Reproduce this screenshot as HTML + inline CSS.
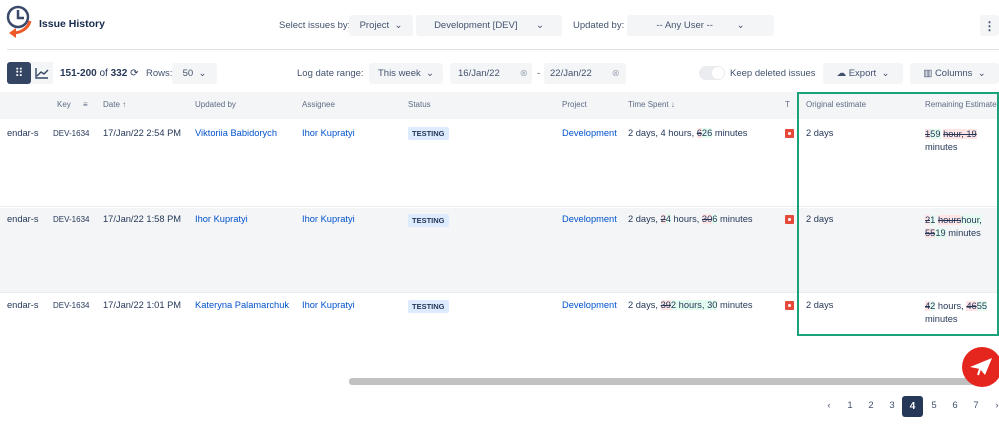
<!DOCTYPE html>
<html><head><meta charset="utf-8"><style>
*{box-sizing:border-box;margin:0;padding:0}
body{width:999px;height:425px;overflow:hidden;background:#fff;font-family:"Liberation Sans",sans-serif;color:#253858;position:relative;font-size:9.3px}
.a{position:absolute;white-space:nowrap}
.sel{position:absolute;background:#f4f5f7;border-radius:3px;height:21px;font-size:9.5px;color:#42526e;display:flex;align-items:center;justify-content:center;white-space:nowrap}
.lbl{position:absolute;font-size:9.5px;color:#42526e;white-space:nowrap}
.th{position:absolute;top:100px;font-size:8px;color:#5e6c84;white-space:nowrap}
.lnk{color:#0052cc}
.del{background:#ffe5e5;text-decoration:line-through}
.ins{background:#e3fcef}
.tag{position:absolute;background:#deebff;color:#253858;font-size:7.5px;font-weight:bold;padding:2px 4px;border-radius:2px}
.red{position:absolute;width:9px;height:9px;background:#e5493a;border-radius:1px}
.red:after{content:"";position:absolute;left:3px;top:3px;width:3px;height:3px;background:#fff;border-radius:50%}
.pg{position:absolute;top:400px;font-size:9.5px;color:#42526e;width:20px;text-align:center}
</style></head><body>
<svg class="a" style="left:5px;top:4px" width="30" height="34" viewBox="0 0 30 34"><circle cx="13" cy="13" r="10" fill="none" stroke="#3b4a6b" stroke-width="2.5"/><path d="M13 6v8h6" fill="none" stroke="#3b4a6b" stroke-width="2.5"/><path d="M25 17c-2 8-10 12-17 12" fill="none" stroke="#f05a28" stroke-width="3"/><path d="M4 29l7-5v10z" fill="#f05a28"/></svg>
<div class="a" style="left:39px;top:18px;font-size:10.5px;font-weight:bold;color:#172b4d">Issue History</div>
<div class="lbl" style="left:279px;top:20px">Select issues by:</div>
<div class="sel" style="left:349px;top:15px;width:64px">Project &nbsp;⌄</div>
<div class="sel" style="left:416px;top:15px;width:146px">Development [DEV] &nbsp;&nbsp;&nbsp;&nbsp;&nbsp;&nbsp;⌄</div>
<div class="lbl" style="left:573px;top:20px">Updated by:</div>
<div class="sel" style="left:627px;top:15px;width:147px">-- Any User -- &nbsp;&nbsp;&nbsp;&nbsp;&nbsp;&nbsp;&nbsp;&nbsp;⌄</div>
<div class="sel" style="left:980px;top:15px;width:19px;font-weight:bold;font-size:12px">⋮</div>
<div class="a" style="left:7px;top:49px;width:992px;height:1px;background:#dfe1e6"></div>
<div class="a" style="left:7px;top:62px;width:24px;height:22px;background:#344563;border-radius:3px;color:#fff;text-align:center;line-height:22px;font-size:12px">⠿</div>
<svg class="a" style="left:31px;top:62px;background:#f4f5f7" width="22" height="22" viewBox="0 0 22 22"><path d="M5 6v10h12M6 14l4-4 3 2 4-4" fill="none" stroke="#344563" stroke-width="1.4"/></svg>
<div class="a" style="left:60px;top:68px;font-size:10px"><b>151-200</b> of <b>332</b> ⟳</div>
<div class="lbl" style="left:146px;top:68px">Rows:</div>
<div class="sel" style="left:172px;top:63px;width:45px">50 &nbsp;⌄</div>
<div class="lbl" style="left:297px;top:68px">Log date range:</div>
<div class="sel" style="left:369px;top:63px;width:74px">This week &nbsp;⌄</div>
<div class="sel" style="left:450px;top:63px;width:82px;justify-content:flex-start;padding-left:8px">16/Jan/22 <span style="margin-left:20px;color:#a5adba">⊗</span></div>
<div class="lbl" style="left:537px;top:68px">-</div>
<div class="sel" style="left:544px;top:63px;width:82px;justify-content:flex-start;padding-left:6px">22/Jan/22 <span style="margin-left:20px;color:#a5adba">⊗</span></div>
<div class="a" style="left:699px;top:66px;width:26px;height:14px;background:#ebecf0;border-radius:7px"><div style="position:absolute;right:1px;top:1px;width:12px;height:12px;border-radius:50%;background:#fff"></div></div>
<div class="lbl" style="left:730px;top:68px">Keep deleted issues</div>
<div class="sel" style="left:823px;top:63px;width:80px">☁ Export &nbsp;⌄</div>
<div class="sel" style="left:910px;top:63px;width:89px">▥ Columns &nbsp;⌄</div>
<div class="a" style="left:0;top:92px;width:999px;height:27px;background:#f4f5f7"></div>
<div class="th" style="left:57px">Key</div><div class="th" style="left:83px">≡</div>
<div class="th" style="left:103px">Date ↑</div>
<div class="th" style="left:195px">Updated by</div>
<div class="th" style="left:302px">Assignee</div>
<div class="th" style="left:408px">Status</div>
<div class="th" style="left:562px">Project</div>
<div class="th" style="left:628px">Time Spent ↓</div>
<div class="th" style="left:785px">T</div>
<div class="th" style="left:806px">Original estimate</div>
<div class="th" style="left:925px">Remaining Estimate</div>
<div class="a" style="left:0;top:121px;width:999px;height:86px;background:#fff;border-bottom:1px solid #ebecf0"></div>
<div class="a" style="left:0;top:208px;width:999px;height:85px;background:#f4f5f7;border-bottom:1px solid #ebecf0"></div>
<div class="a" style="left:7px;top:128px">endar-s</div><div class="a" style="left:53px;top:129px;font-size:8px">DEV-1634</div><div class="a" style="left:103px;top:128px">17/Jan/22 2:54 PM</div><div class="a lnk" style="left:195px;top:128px">Viktoriia Babidorych</div><div class="a lnk" style="left:302px;top:128px">Ihor Kupratyi</div><div class="tag" style="left:408px;top:127px">TESTING</div><div class="a lnk" style="left:562px;top:128px">Development</div><div class="a" style="left:628px;top:128px">2 days, 4 hours, <span class="del">6</span><span class="ins">26</span> minutes</div><div class="red" style="left:785px;top:129px"></div><div class="a" style="left:806px;top:128px">2 days</div><div class="a" style="left:925px;top:128px;line-height:13px"><span class="del">1</span><span class="ins">59</span> <span class="del">hour, 19</span><br>minutes</div>
<div class="a" style="left:7px;top:214px">endar-s</div><div class="a" style="left:53px;top:215px;font-size:8px">DEV-1634</div><div class="a" style="left:103px;top:214px">17/Jan/22 1:58 PM</div><div class="a lnk" style="left:195px;top:214px">Ihor Kupratyi</div><div class="a lnk" style="left:302px;top:214px">Ihor Kupratyi</div><div class="tag" style="left:408px;top:214px">TESTING</div><div class="a lnk" style="left:562px;top:214px">Development</div><div class="a" style="left:628px;top:214px">2 days, <span class="del">2</span><span class="ins">4</span> hours, <span class="del">30</span><span class="ins">6</span> minutes</div><div class="red" style="left:785px;top:215px"></div><div class="a" style="left:806px;top:214px">2 days</div><div class="a" style="left:925px;top:214px;line-height:13px"><span class="del">2</span><span class="ins">1</span> <span class="del">hours</span><span class="ins">hour,</span><br><span class="del">55</span><span class="ins">19</span> minutes</div>
<div class="a" style="left:7px;top:300px">endar-s</div><div class="a" style="left:53px;top:301px;font-size:8px">DEV-1634</div><div class="a" style="left:103px;top:300px">17/Jan/22 1:01 PM</div><div class="a lnk" style="left:195px;top:300px">Kateryna Palamarchuk</div><div class="a lnk" style="left:302px;top:300px">Ihor Kupratyi</div><div class="tag" style="left:408px;top:300px">TESTING</div><div class="a lnk" style="left:562px;top:300px">Development</div><div class="a" style="left:628px;top:300px">2 days, <span class="del">39</span><span class="ins">2 hours, 30</span> minutes</div><div class="red" style="left:785px;top:301px"></div><div class="a" style="left:806px;top:300px">2 days</div><div class="a" style="left:925px;top:300px;line-height:13px"><span class="del">4</span><span class="ins">2</span> hours, <span class="del">46</span><span class="ins">55</span><br>minutes</div>
<div class="a" style="left:797px;top:92px;width:202px;height:244px;border:2px solid #1aa37a"></div>
<div class="a" style="left:349px;top:378px;width:630px;height:7px;background:#c1c1c1;border-radius:3px"></div>
<div class="a" style="left:962px;top:347px;width:40px;height:40px;border-radius:50%;background:#e5261f"></div>
<svg class="a" style="left:968px;top:355px" width="28" height="24" viewBox="0 0 28 24"><path d="M2 12L24 3 17 20 12 14z" fill="#fff"/><path d="M12 14l-2 6" stroke="#fff" stroke-width="2"/></svg>
<div class="pg" style="left:819px">‹</div><div class="pg" style="left:840px">1</div><div class="pg" style="left:861px">2</div><div class="pg" style="left:882px">3</div>
<div class="a" style="left:902px;top:396px;width:21px;height:21px;background:#253858;border-radius:3px;color:#fff;font-size:10px;font-weight:bold;text-align:center;line-height:21px">4</div>
<div class="pg" style="left:924px">5</div><div class="pg" style="left:945px">6</div><div class="pg" style="left:966px">7</div><div class="pg" style="left:987px">›</div>
</body></html>
